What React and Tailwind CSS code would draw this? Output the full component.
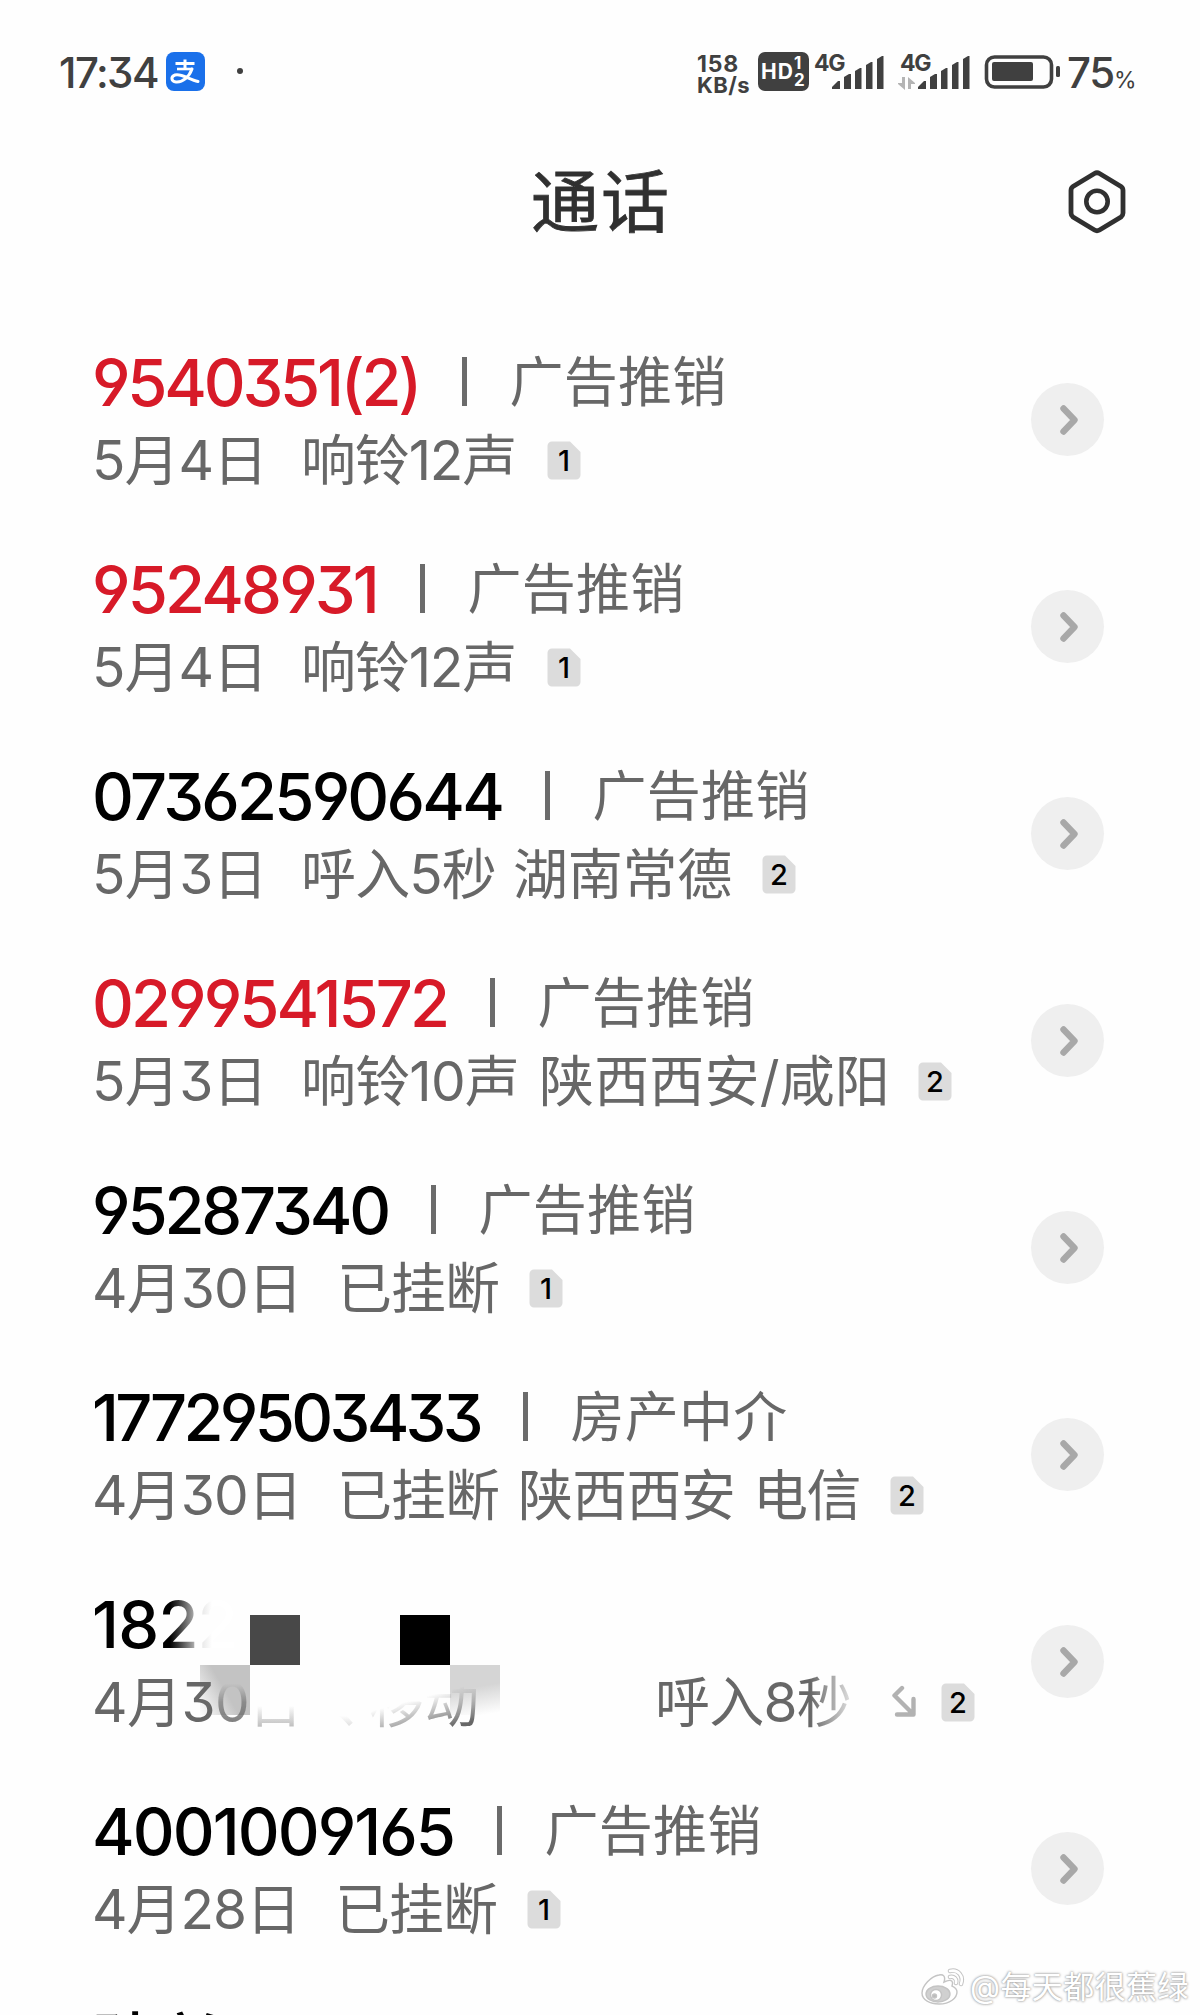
import React, { useLayoutEffect, useRef, useState } from "react";

const calls = [
  {
    number: "9540351(2)",
    width: 327,
    missed: true,
    tag: "广告推销",
    info: [
      { text: "5月4日", width: 175, gap: 34 },
      { text: "响铃12声", width: 215, gap: 31 },
    ],
    sim: 1,
  },
  {
    number: "95248931",
    width: 285,
    missed: true,
    tag: "广告推销",
    info: [
      { text: "5月4日", width: 175, gap: 34 },
      { text: "响铃12声", width: 215, gap: 31 },
    ],
    sim: 1,
  },
  {
    number: "07362590644",
    width: 410,
    tag: "广告推销",
    info: [
      { text: "5月3日", width: 175, gap: 34 },
      { text: "呼入5秒", width: 195, gap: 17 },
      { text: "湖南常德", width: 219, gap: 30 },
    ],
    sim: 2,
  },
  {
    number: "0299541572",
    width: 355,
    missed: true,
    tag: "广告推销",
    info: [
      { text: "5月3日", width: 175, gap: 34 },
      { text: "响铃10声", width: 218, gap: 20 },
      { text: "陕西西安/咸阳", width: 351, gap: 28 },
    ],
    sim: 2,
  },
  {
    number: "95287340",
    width: 296,
    tag: "广告推销",
    info: [
      { text: "4月30日", width: 210, gap: 35 },
      { text: "已挂断", width: 162, gap: 30 },
    ],
    sim: 1,
  },
  {
    number: "17729503433",
    width: 388,
    tag: "房产中介",
    info: [
      { text: "4月30日", width: 210, gap: 35 },
      { text: "已挂断", width: 162, gap: 19 },
      { text: "陕西西安", width: 217, gap: 18 },
      { text: "电信", width: 107, gap: 30 },
    ],
    sim: 2,
  },
  { hidden: true, sim: 2 },
  {
    number: "4001009165",
    width: 362,
    tag: "广告推销",
    info: [
      { text: "4月28日", width: 208, gap: 35 },
      { text: "已挂断", width: 162, gap: 30 },
    ],
    sim: 1,
  },
];

// Spreads the characters so that the text fills the given width
const FitText = ({ text, width, gap = 0, className = "" }) => {
  const ref = useRef(null);
  const [spacing, setSpacing] = useState(0);

  useLayoutEffect(() => {
    const natural = ref.current.getBoundingClientRect().width;
    setSpacing((width - natural) / text.length);
  }, [text, width]);

  return (
    <span
      className={`shrink-0 whitespace-nowrap ${className}`}
      style={{ width: width, marginRight: gap }}
    >
      <span ref={ref} style={{ letterSpacing: spacing }}>
        {text}
      </span>
    </span>
  );
};

const SimBadge = ({ sim }) => (
  <span className="relative flex h-[39px] w-[34px] shrink-0 items-center justify-center">
    <svg className="absolute inset-0" width="34" height="39" viewBox="0 0 34 39">
      <path
        d="M5 0.5H23L33.5 11V34a4.5 4.5 0 0 1-4.5 4.5H5A4.5 4.5 0 0 1 .5 34V5A4.5 4.5 0 0 1 5 .5Z"
        fill="#dcdcdc"
      />
    </svg>
    <span className="relative text-[29px] leading-none font-medium text-black">
      {sim}
    </span>
  </span>
);

const DetailButton = () => (
  <button className="flex size-[73px] shrink-0 items-center justify-center rounded-full bg-[#efefef]">
    <svg width="24" height="34" viewBox="0 0 24 34" fill="none">
      <path
        d="M7.500 5.500L18.500 17L7.500 28.500"
        stroke="#a8a8a8"
        strokeWidth="6.4"
        strokeLinecap="round"
        strokeLinejoin="round"
      />
    </svg>
  </button>
);

const HiddenCall = ({ sim }) => (
  <div className="relative w-[900px]">
    {/* mosaic */}
    <div className="absolute top-[29px] left-[158px] size-[50px] bg-[#484848]" />
    <div className="absolute top-[29px] left-[308px] size-[50px] bg-black" />
    <div className="absolute top-[79px] left-[108px] size-[50px] bg-[linear-gradient(60deg,#c3c3c300_0%,#c3c3c3_50%)]" />
    <div className="absolute top-[79px] left-[358px] size-[50px] bg-[linear-gradient(170deg,#d5d5d5_45%,#d5d5d500_95%)]" />
    <div className="relative flex h-[78px] text-[65px] leading-[78px] font-[450]">
      <span className="bg-[linear-gradient(90deg,#000_78px,#333_86px,#999_100px,#e4e4e4_108px,#fff_120px)] bg-clip-text text-transparent">
        <FitText text="1822" width={145} />
      </span>
    </div>
    <div className="relative flex h-[76px] items-center text-[55px] leading-[76px] text-[#676767]">
      <FitText text="4月3" width={123} />
      <span className="w-[33px] shrink-0 bg-[linear-gradient(180deg,#67676700_20px,#67676799_38px,#676767dd_60px)] bg-clip-text text-transparent">
        0
      </span>
      <span className="w-[86px] shrink-0 bg-[linear-gradient(180deg,#67676700_42px,#67676722_48px,#67676766_62px)] bg-clip-text text-transparent">
        日
      </span>
      <span className="w-[35px] shrink-0 overflow-hidden bg-[linear-gradient(180deg,#67676700_52px,#67676733_62px)] bg-clip-text text-transparent">
        、
      </span>
      <span className="mr-[177px] w-[109px] shrink-0 bg-[linear-gradient(165deg,#67676700_46px,#67676777_64px,#676767_82px)] bg-clip-text whitespace-nowrap text-transparent">
        移动
      </span>
      <span className="shrink-0 bg-[linear-gradient(90deg,#676767_155px,#aaa_178px,#ddd_195px)] bg-clip-text text-transparent">
        <FitText text="呼入8秒" width={196} />
      </span>
      <svg className="mr-[24px] ml-[40px] shrink-0" width="26" height="34" viewBox="0 0 26 34" fill="none">
        <path
          d="M11 3L3.500 10.500L22 29M6 29.500H22.500V14"
          stroke="#b2b2b2"
          strokeWidth="4.4"
          strokeLinecap="round"
          strokeLinejoin="round"
        />
      </svg>
      <SimBadge sim={sim} />
    </div>
  </div>
);

const CallRow = ({ call }) => (
  <li className="flex h-[207px] pt-[28px] pl-[92px]">
    {call.hidden ? (
      <HiddenCall sim={call.sim} />
    ) : (
      <div className="w-[900px]">
        <div className="flex h-[78px] items-center leading-[78px]">
          <FitText
            text={call.number}
            width={call.width}
            className={
              call.missed
                ? "text-[65px] font-[450] text-[#d71a28]"
                : "text-[65px] font-[450] text-black"
            }
          />
          <span className="mr-[43px] mb-[3px] ml-[43px] h-[49px] w-[4.500px] bg-[#6b6b6b]" />
          <FitText
            text={call.tag}
            width={217}
            className="text-[54px] text-[#676767]"
          />
        </div>
        <div className="flex h-[76px] items-center text-[55px] leading-[76px] text-[#676767]">
          {call.info.map((part) => (
            <FitText
              key={part.text}
              text={part.text}
              width={part.width}
              gap={part.gap}
            />
          ))}
          <SimBadge sim={call.sim} />
        </div>
      </div>
    )}
    <div className="ml-[39px] pt-[39px]">
      <DetailButton />
    </div>
  </li>
);

const Signal = () => (
  <svg width="52" height="34" viewBox="0 0 52 34" fill="#404040">
    <path d="M0 34V32L6 26H8V34Z" />
    <path d="M12 34V22L17 19H19V34Z" />
    <path d="M23 34V16L28 13H29.500V34Z" />
    <path d="M34 34V10L39 7H40.500V34Z" />
    <path d="M45 34V4L50 1H51.500V34Z" />
  </svg>
);

const StatusBar = () => (
  <div className="flex h-[142px] items-start pt-[50px] pl-[59px] text-[#404040]">
    <span className="mt-[2px] flex h-[42px] w-[107px] items-center text-[42px] leading-[42px] font-medium">
      <FitText text="17:34" width={99} />
    </span>
    <svg className="mt-[2px]" width="39" height="39" viewBox="0 0 39 39" fill="none">
      <rect width="39" height="39" rx="8" fill="#1a70ea" />
      <g stroke="#fff" strokeLinecap="round">
        <path d="M9.500 11.500H28.500M19 7.500V17" strokeWidth="3" strokeLinecap="butt" />
        <path d="M11 17H26" strokeWidth="2.600" strokeLinecap="butt" />
        <path
          d="M26 17C23 25 17 30.500 10 30C5 29.500 4.500 24.500 9 23C15 21 23 27.500 32 29.500"
          strokeWidth="3"
        />
      </g>
    </svg>
    <span className="mt-[18px] ml-[32px] size-[6px] rounded-full bg-[#404040]" />
    <div className="ml-[454px] w-[61px] pt-[4px] font-bold">
      <div className="flex h-[21px] text-[23px] leading-[21px]">
        <FitText text="158" width={42} />
      </div>
      <div className="flex h-[20px] text-[22px] leading-[20px]">
        <FitText text="KB/s" width={53} />
      </div>
    </div>
    <div className="mt-[2px] flex h-[39px] w-[51px] items-center rounded-[7px] bg-[#404040] pl-[3px] font-bold text-white">
      <span className="flex text-[21px] leading-none">
        <FitText text="HD" width={33} />
      </span>
      <span className="flex flex-col text-[17px] leading-[17px]">
        <span>1</span>
        <span>2</span>
      </span>
    </div>
    <div className="ml-[5px] flex w-[84px] pt-[5px]">
      <span className="flex w-[18px] text-[23px] leading-[17px] font-bold">
        <FitText text="4G" width={30} />
      </span>
      <Signal />
    </div>
    <div className="flex w-[86px] pt-[5px]">
      <div className="w-[20px]">
        <div className="ml-[2px] flex text-[23px] leading-[17px] font-bold">
          <FitText text="4G" width={30} />
        </div>
        <svg className="mt-[5px]" width="17" height="13" viewBox="0 0 17 13" fill="#b4b4b4">
          <path d="M4 0H7V13L0 7V6H4Z" />
          <path d="M10 0L17 6V7H13V12H10Z" />
        </svg>
      </div>
      <Signal />
    </div>
    <svg className="mt-[4px]" width="76" height="35" viewBox="0 0 76 35" fill="none">
      <rect x="2.500" y="3" width="65" height="30" rx="8" stroke="#404040" strokeWidth="3.600" />
      <rect x="8" y="8" width="41" height="19" rx="2" fill="#404040" />
      <rect x="72" y="12" width="4" height="11" rx="1.500" fill="#404040" />
    </svg>
    <span className="mt-[2px] ml-[7px] flex h-[42px] items-baseline text-[42px] leading-[42px] font-medium">
      <FitText text="75" width={47} />
      <span className="text-[23px] font-normal">%</span>
    </span>
  </div>
);

const Header = () => (
  <div className="flex h-[174px] justify-between pr-[73px] pl-[531px]">
    <h1 className="flex pt-[18px] text-[68px] leading-[84px] text-[#303030] [-webkit-text-stroke:0.8px_#303030]">
      <FitText text="通话" width={140} />
    </h1>
    <svg className="mt-[27px]" width="60" height="66" viewBox="0 0 60 66" fill="none">
      <path
        d="M27.500 4.500Q30 3 32.500 4.500L54 17.500Q56 18.800 56 21.500V44Q56 46.500 54 48L32.500 61Q30 62.500 27.500 61L6 48Q4 46.500 4 44V21.500Q4 18.800 6 17.500Z"
        stroke="#303030"
        strokeWidth="4.800"
      />
      <circle cx="30" cy="32.500" r="10.700" stroke="#303030" strokeWidth="4.600" />
    </svg>
  </div>
);

const Watermark = () => (
  <div className="absolute right-[11px] bottom-[8px] flex items-center">
    <svg className="mr-[4px]" width="46" height="40" viewBox="0 0 46 40" fill="none">
      <g stroke="#c4c4c4" strokeWidth="1.400">
        <path
          d="M19 8C11 9 2 19 2 26C2 33 10 37 19 37C30 37 37 31 37 25C37 21 34 20 32 19C34 13 30 12 24 15C26 9 23 7 19 8Z"
          fill="#fff"
        />
        <ellipse cx="18" cy="27" rx="12" ry="8" fill="#d0d0d0" />
        <circle cx="16" cy="28" r="5.500" fill="#fff" />
        <circle cx="14.500" cy="29" r="2" fill="#bbb" />
      </g>
      <path d="M30 4C38 2 44 9 41 17M30 10C34 9 37 12 36 16" stroke="#c4c4c4" strokeWidth="4.500" strokeLinecap="round" />
      <path d="M30 4C38 2 44 9 41 17M30 10C34 9 37 12 36 16" stroke="#fff" strokeWidth="2.600" strokeLinecap="round" />
    </svg>
    <span className="flex text-[31px] leading-[40px] text-white [text-shadow:0_0_2px_#999,0_0_3px_#aaa]">
      <FitText text="@每天都很蕉绿" width={219} />
    </span>
  </div>
);

const App = () => {
  return (
    <div className="relative h-[2015px] w-[1200px] overflow-hidden bg-[#fefefe] font-['Inter','Noto_Sans_CJK_SC',sans-serif] [font-feature-settings:'cv03','cv04','cv09']">
      <StatusBar />
      <Header />
      <ul>
        {calls.map((call, i) => (
          <CallRow key={i} call={call} />
        ))}
        <li className="h-[43px] overflow-hidden pt-[31px] pl-[93px] text-[62px] leading-[78px] font-medium text-black">
          孙兴
        </li>
      </ul>
      <Watermark />
    </div>
  );
};

export default App;
